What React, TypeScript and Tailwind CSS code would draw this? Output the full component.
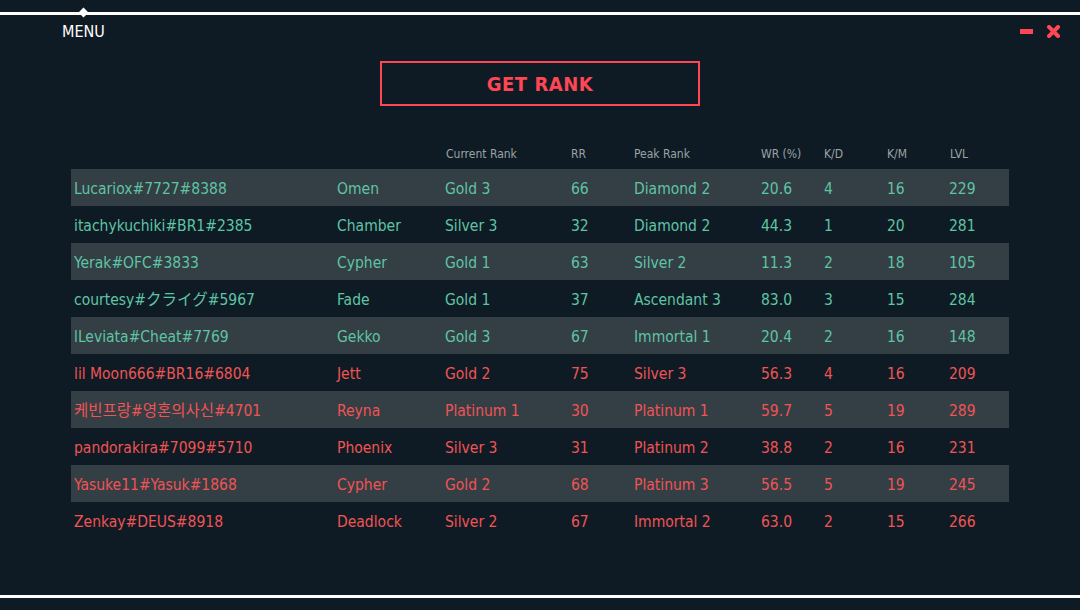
import React from "react";

type Row = { name: string; agent: string; cur: string; rr: string; peak: string; wr: string; kd: string; km: string; lvl: string; team: "g" | "r" };

const rows: Row[] = [
  { name: "Lucariox#7727#8388", agent: "Omen", cur: "Gold 3", rr: "66", peak: "Diamond 2", wr: "20.6", kd: "4", km: "16", lvl: "229", team: "g" },
  { name: "itachykuchiki#BR1#2385", agent: "Chamber", cur: "Silver 3", rr: "32", peak: "Diamond 2", wr: "44.3", kd: "1", km: "20", lvl: "281", team: "g" },
  { name: "Yerak#OFC#3833", agent: "Cypher", cur: "Gold 1", rr: "63", peak: "Silver 2", wr: "11.3", kd: "2", km: "18", lvl: "105", team: "g" },
  { name: "courtesy#クライグ#5967", agent: "Fade", cur: "Gold 1", rr: "37", peak: "Ascendant 3", wr: "83.0", kd: "3", km: "15", lvl: "284", team: "g" },
  { name: "lLeviata#Cheat#7769", agent: "Gekko", cur: "Gold 3", rr: "67", peak: "Immortal 1", wr: "20.4", kd: "2", km: "16", lvl: "148", team: "g" },
  { name: "lil Moon666#BR16#6804", agent: "Jett", cur: "Gold 2", rr: "75", peak: "Silver 3", wr: "56.3", kd: "4", km: "16", lvl: "209", team: "r" },
  { name: "케빈프랑#영혼의사신#4701", agent: "Reyna", cur: "Platinum 1", rr: "30", peak: "Platinum 1", wr: "59.7", kd: "5", km: "19", lvl: "289", team: "r" },
  { name: "pandorakira#7099#5710", agent: "Phoenix", cur: "Silver 3", rr: "31", peak: "Platinum 2", wr: "38.8", kd: "2", km: "16", lvl: "231", team: "r" },
  { name: "Yasuke11#Yasuk#1868", agent: "Cypher", cur: "Gold 2", rr: "68", peak: "Platinum 3", wr: "56.5", kd: "5", km: "19", lvl: "245", team: "r" },
  { name: "Zenkay#DEUS#8918", agent: "Deadlock", cur: "Silver 2", rr: "67", peak: "Immortal 2", wr: "63.0", kd: "2", km: "15", lvl: "266", team: "r" },
];

const grid = "grid grid-cols-[263px_108px_126px_63px_127px_63px_63px_62px_63px]";

export default function App() {
  return (
    <div
      className="w-[1080px] h-[610px] bg-[#0f1b24] flex flex-col overflow-hidden"
      style={{ fontFamily: '"DejaVu Sans Condensed", "DejaVu Sans", "Noto Sans CJK KR", "Noto Sans CJK JP", sans-serif' }}
    >
      <div className="h-[12px]" />
      <div className="relative h-[3px] bg-white">
        <div className="absolute left-[80px] top-[-3px] w-[7px] h-[7px] bg-white rotate-45" />
      </div>
      <div className="flex items-center h-[32px] pl-[62px] pr-[20px]">
        <span className="text-white text-[16px] leading-none pt-[2px]">MENU</span>
        <div className="ml-auto flex items-center gap-[14px]">
          <div className="w-[13px] h-[5px] bg-[#ff4655]" />
          <svg width="13" height="13" viewBox="0 0 13 13">
            <path d="M2 2 L11 11 M11 2 L2 11" stroke="#ff4655" strokeWidth="4" strokeLinecap="square" />
          </svg>
        </div>
      </div>
      <div className="h-[14px]" />
      <div className="mx-auto w-[320px] h-[45px] border-2 border-[#ff4655] flex items-center justify-center">
        <span className="text-[#ff4655] font-bold text-[20px] tracking-[0.5px]">GET RANK</span>
      </div>
      <div className="h-[37px]" />
      <div className="ml-[71px] w-[938px]">
        <div className={`${grid} h-[26px] items-start pt-[2px] text-[12px] text-[#9aa3a6]`}>
          <div />
          <div />
          <div className="pl-[4px]">Current Rank</div>
          <div className="pl-[3px]">RR</div>
          <div className="pl-[3px]">Peak Rank</div>
          <div className="pl-[3px]">WR (%)</div>
          <div className="pl-[3px]">K/D</div>
          <div className="pl-[3px]">K/M</div>
          <div className="pl-[4px]">LVL</div>
        </div>
        {rows.map((r, i) => (
          <div
            key={i}
            className={`${grid} h-[37px] items-center pt-[4px] text-[15.5px] ${i % 2 === 0 ? "bg-[#343e45]" : ""} ${r.team === "g" ? "text-[#5ec4a4]" : "text-[#f05454]"}`}
          >
            <div className="pl-[3px] whitespace-nowrap">{r.name}</div>
            <div className="pl-[3px]">{r.agent}</div>
            <div className="pl-[3px]">{r.cur}</div>
            <div className="pl-[3px]">{r.rr}</div>
            <div className="pl-[3px]">{r.peak}</div>
            <div className="pl-[3px]">{r.wr}</div>
            <div className="pl-[3px]">{r.kd}</div>
            <div className="pl-[3px]">{r.km}</div>
            <div className="pl-[3px]">{r.lvl}</div>
          </div>
        ))}
      </div>
      <div className="flex-1" />
      <div className="h-[3px] bg-white" />
      <div className="h-[12px]" />
    </div>
  );
}
